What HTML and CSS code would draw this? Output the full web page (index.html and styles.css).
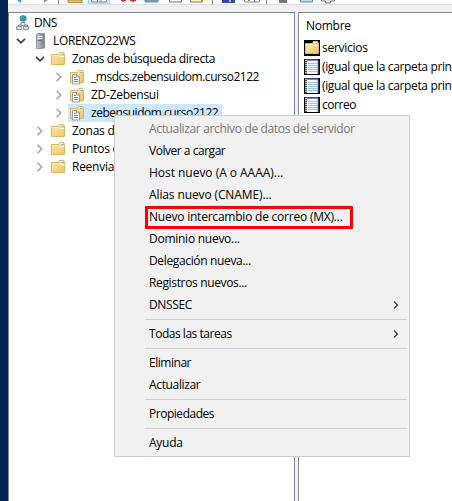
FILE: index.html
```
<!DOCTYPE html>
<html lang="es">
<head>
<meta charset="utf-8">
<title>DNS</title>
<link rel="stylesheet" href="styles.css">
</head>
<body>
<svg class="defs" width="0" height="0">
  <defs>
    <linearGradient id="gold" x1="0" y1="0" x2="1" y2="1"><stop offset="0" stop-color="#ffedb0"/><stop offset="1" stop-color="#e8c46a"/></linearGradient>
    <linearGradient id="steel" x1="0" y1="0" x2="1" y2="0"><stop offset="0" stop-color="#c3ccd0"/><stop offset="1" stop-color="#6f7b82"/></linearGradient>
    <symbol id="folder" viewBox="0 0 16 16">
      <path d="M.5 3.500h7l1-2h4l1 2v10h-13z" fill="url(#gold)" stroke="#d8b560"/>
      <path d="M9 2.500h3" stroke="#fff" />
      <path d="M10.500 3.500h2" stroke="#78a9d0"/>
      <path d="M1 4.500h6.500l1 1h5" fill="none" stroke="#fff3c8"/>
    </symbol>
    <symbol id="zone" viewBox="0 0 16 16">
      <path d="M.5 3.500h7l1-2h4l1 2v10h-13z" fill="url(#gold)" stroke="#d8b560"/>
      <path d="M9 2.500h3" stroke="#fff"/><path d="M10.500 3.500h2" stroke="#78a9d0"/>
      <path d="M2.500 5.500h4.500l2.500 2.500v7h-7z" fill="#fff" stroke="#8d9baa"/>
      <path d="M6.500 5.500v2.500h3" fill="none" stroke="#8d9baa"/>
      <path d="M4 8.500h2M4 10.500h4M4 12.500h4" stroke="#4987cf"/>
    </symbol>
    <symbol id="record" viewBox="0 0 16 16">
      <path d="M0 0h16v16H0z" fill="#000"/>
      <path d="M2 1h12v14H2z" fill="#f5faff"/>
      <path d="M1 1h13" stroke="#4d5ea3" stroke-width="1.500"/><path d="M14 1v14" stroke="#6779c2" stroke-width="1"/>
      <path d="M4 4.500h9M4 6.500h9M4 8.500h9M4 10.500h9M4 12.500h9" stroke="#9cc4e2"/>
      <path d="M2 1v14" stroke="#b9b9bc" stroke-width="2"/><path d="M2 2v13" stroke="#555" stroke-width="2" stroke-dasharray="1 1"/>
    </symbol>
    <symbol id="open" viewBox="0 0 10 8"><path d="M1 1.800l4 4 4-4" fill="none" stroke="#404040" stroke-width="1.700"/></symbol>
    <symbol id="closed" viewBox="0 0 8 10"><path d="M1.500 .8l4.200 4.200-4.200 4.200" fill="none" stroke="#a6a6a6" stroke-width="1.600"/></symbol>
  </defs>
</svg>
<div class="window">
  <svg class="toolbar" width="444" height="5" viewBox="8 0 444 5">
    <path d="M17 0l4 3v-3z" fill="#3d91d1"/><path d="M44 0v3l4-3z" fill="#999"/>
    <path d="M58.500 0v4M212.500 0v4M266.500 0v4" stroke="#858585"/>
    <path d="M68 0h14v2.500H68z" fill="#ecc969" stroke="#b18b38"/>
    <path d="M88.500-1h21v5h-21z" fill="#d5eafd" stroke="#93cbf7"/>
    <path d="M91.500-1h15v3h-15z" fill="#fff" stroke="#7c858f"/><path d="M97.500 0v2M101 0v2" stroke="#687c94"/>
    <path d="M121 0l2 1.500 3-1.500zM130 0l3 1.500 3-1.500z" fill="#d92a2a" stroke="#d92a2a"/>
    <path d="M145 0h13v2h-13z" fill="#43bde1" stroke="#788894"/>
    <path d="M169.500-1h12v3h-12z" fill="#fafafa" stroke="#777"/>
    <path d="M190.500-1h12v3h-12z" fill="#fff1b0" stroke="#827d5e"/><path d="M201 0h2v2h-2z" fill="#5cc91b"/>
    <path d="M222 0h13v3h-13z" fill="#334a94"/><path d="M229 0h2v2h-2z" fill="#a6bee7"/>
    <path d="M244.500-1h15v3h-15z" fill="#fff" stroke="#7a8797"/><path d="M248 0h2v1h-2z" fill="#46a829"/><path d="M254.500 0v2" stroke="#4779af"/>
    <path d="M279 0h8v3h-8z" fill="#777"/>
    <path d="M300.500-1h12v3h-12z" fill="#b7dced" stroke="#6c8498"/>
    <path d="M321.500-1v2h4v2h5v-2h4v-2" fill="#eee" stroke="#777"/>
    <path d="M8 4.500h80M110 4.500h342" stroke="#dedede"/>
  </svg>
  <div class="panes">
    <div class="tree">
      <div class="row root"><svg width="14" height="16" viewBox="0 0 14 16"><circle cx="7" cy="3.500" r="3.300" fill="#3883c4"/><path d="M4 2l3-2 1 3-2 3M8 4l3-1-1 3z" fill="#46b15a"/><path d="M7 7v4M2.500 12v-2h9v2" fill="none" stroke="#777"/><path d="M5 7.500h4v3H5zM.5 11.500h5v3h-5zM7.500 11.500h5v3h-5z" fill="#e1e5e8" stroke="#8c9297"/></svg><span class="label tight">DNS</span></div>
      <div class="row server"><svg class="arrow" width="10" height="8"><use href="#open"/></svg><svg class="tower" width="9" height="16" viewBox="0 0 9 16"><path d="M.5 1.500l1-1h7v14l-1 1h-7z" fill="url(#steel)" stroke="#87949a"/><path d="M1.500 3.500h5M1.500 5.500h5" stroke="#eef2f3"/><path d="M1.500 7.500h5" stroke="#66747b"/><path d="M5 12h2v2H5z" fill="#63d84b"/></svg><span class="label snug">LORENZO22WS</span></div>
      <div class="row level1"><svg class="arrow" width="10" height="8"><use href="#open"/></svg><svg class="icon" width="16" height="16"><use href="#folder"/></svg><span class="label snug">Zonas de búsqueda directa</span></div>
      <div class="row level2"><svg class="arrow" width="8" height="10"><use href="#closed"/></svg><svg class="icon" width="16" height="16"><use href="#zone"/></svg><span class="label tight">_msdcs.zebensuidom.curso2122</span></div>
      <div class="row level2"><svg class="arrow" width="8" height="10"><use href="#closed"/></svg><svg class="icon" width="16" height="16"><use href="#zone"/></svg><span class="label">ZD-Zebensui</span></div>
      <div class="row level2 selected"><svg class="arrow" width="8" height="10"><use href="#closed"/></svg><svg class="icon" width="16" height="16"><use href="#zone"/></svg><span class="label tight">zebensuidom.curso2122</span></div>
      <div class="row level1"><svg class="arrow" width="8" height="10"><use href="#closed"/></svg><svg class="icon" width="16" height="16"><use href="#folder"/></svg><span class="label">Zonas de</span></div>
      <div class="row level1"><svg class="arrow" width="8" height="10"><use href="#closed"/></svg><svg class="icon" width="16" height="16"><use href="#folder"/></svg><span class="label">Puntos de</span></div>
      <div class="row level1"><svg class="arrow" width="8" height="10"><use href="#closed"/></svg><svg class="icon" width="16" height="16"><use href="#folder"/></svg><span class="label">Reenvia</span></div>
    </div>
    <div class="list">
      <div class="heading">Nombre</div>
      <div class="record"><span class="folder-box"><svg width="16" height="16" viewBox="-1 0 16 16"><use href="#folder" width="16" height="16"/></svg></span><span>servicios</span></div>
      <div class="record"><svg width="16" height="16"><use href="#record"/></svg><span class="snug">(igual que la carpeta prin</span></div>
      <div class="record"><svg width="16" height="16"><use href="#record"/></svg><span class="snug">(igual que la carpeta prin</span></div>
      <div class="record"><svg width="16" height="16"><use href="#record"/></svg><span class="tight">correo</span></div>
    </div>
  </div>
</div>
<div class="menu">
  <div class="item disabled"><span class="snug">Actualizar archivo de datos del servidor</span></div>
  <div class="item"><span class="tight">Volver a cargar</span></div>
  <div class="item"><span class="wide">Host nuevo (A o AAAA)...</span></div>
  <div class="item"><span class="loose">Alias nuevo (CNAME)...</span></div>
  <div class="item marked"><span class="mx">Nuevo intercambio de correo (MX)...</span></div>
  <div class="item"><span>Dominio nuevo...</span></div>
  <div class="item"><span class="snug">Delegación nueva...</span></div>
  <div class="item"><span class="snug">Registros nuevos...</span></div>
  <div class="item"><span class="snug">DNSSEC</span><svg width="6" height="8" viewBox="0 0 6 8"><path d="M1 .5l3.500 3.500L1 7.500" fill="none" stroke="#333" stroke-width="1.200"/></svg></div>
  <div class="separator"></div>
  <div class="item"><span class="tight">Todas las tareas</span><svg width="6" height="8" viewBox="0 0 6 8"><path d="M1 .5l3.500 3.500L1 7.500" fill="none" stroke="#333" stroke-width="1.200"/></svg></div>
  <div class="separator"></div>
  <div class="item"><span class="tight">Eliminar</span></div>
  <div class="item"><span class="snug">Actualizar</span></div>
  <div class="separator"></div>
  <div class="item"><span class="tight">Propiedades</span></div>
  <div class="separator"></div>
  <div class="item"><span>Ayuda</span></div>
</div>
</body>
</html>
```
FILE: styles.css
```
*, *::before, *::after { box-sizing: border-box; }
body {
  margin: 0;
  width: 452px;
  height: 501px;
  overflow: hidden;
  background: #002456;
  color: #000;
  font: 12px/18px "Open Sans", "Noto Sans", sans-serif;
  letter-spacing: -0.26px;
  white-space: nowrap;
}
.wide { letter-spacing: -0.03px; }
.loose { letter-spacing: -0.12px; }
.mx { letter-spacing: -0.22px; }
.snug { letter-spacing: -0.35px; }
.tight { letter-spacing: -0.47px; }
svg { display: block; flex: none; }
.defs { position: absolute; }
.window {
  height: 501px;
  margin-left: 7px;
  border-left: 1px solid #142237;
  background: #f0f0f0;
  display: flex;
  flex-direction: column;
}
.toolbar { background: #fff; }
.panes { flex: 1; margin-top: 7px; display: flex; gap: 3px; }
.tree {
  width: 287px;
  border: 1px solid #828790;
  border-bottom: 0;
  background: #fff;
  padding-top: 1px;
}
.row { height: 18px; display: flex; align-items: center; }
.root { padding-left: 7px; gap: 4px; }
.server { padding-left: 7px; }
.tower { margin: 0 8px 0 4px; }
.level1 { padding-left: 26px; }
.level2 { padding-left: 46px; }
.arrow { margin-right: 6px; }
.level1 .arrow[width="8"] { margin-left: 1px; margin-right: 7px; }
.level2 .arrow { margin-right: 7px; }
.icon { margin-right: 5px; }
.selected {
  width: 213px;
  background: linear-gradient(#cce8ff, #cce8ff) 59px 0 no-repeat;
}
.list {
  flex: 1;
  min-width: 0;
  border: solid #828790;
  border-width: 1px 0 0 1px;
  background: #fff;
  padding: 4px 0 0 5px;
}
.heading { height: 21px; padding: 0 0 0 2px; }
.record { height: 19px; display: flex; align-items: center; gap: 2px; }
.folder-box { background: #000; }
.menu {
  position: absolute;
  left: 114px;
  top: 115px;
  width: 296px;
  height: 342px;
  padding: 2px;
  border: 1px solid #ccc;
  background: #f1f1f1;
}
.item {
  height: 22px;
  padding: 0 8px 0 32px;
  display: flex;
  align-items: center;
  justify-content: space-between;
  position: relative;
}
.disabled { color: #777; }
.marked::after {
  content: "";
  position: absolute;
  left: 28px;
  top: 0;
  width: 208px;
  height: 23px;
  border: 3px solid #f00;
  border-radius: 1px;
}
.separator { height: 7px; margin-left: 28px; border-top: 3px solid transparent; }
.separator::before { content: ""; display: block; height: 1px; background: #d4d4d4; }
```
